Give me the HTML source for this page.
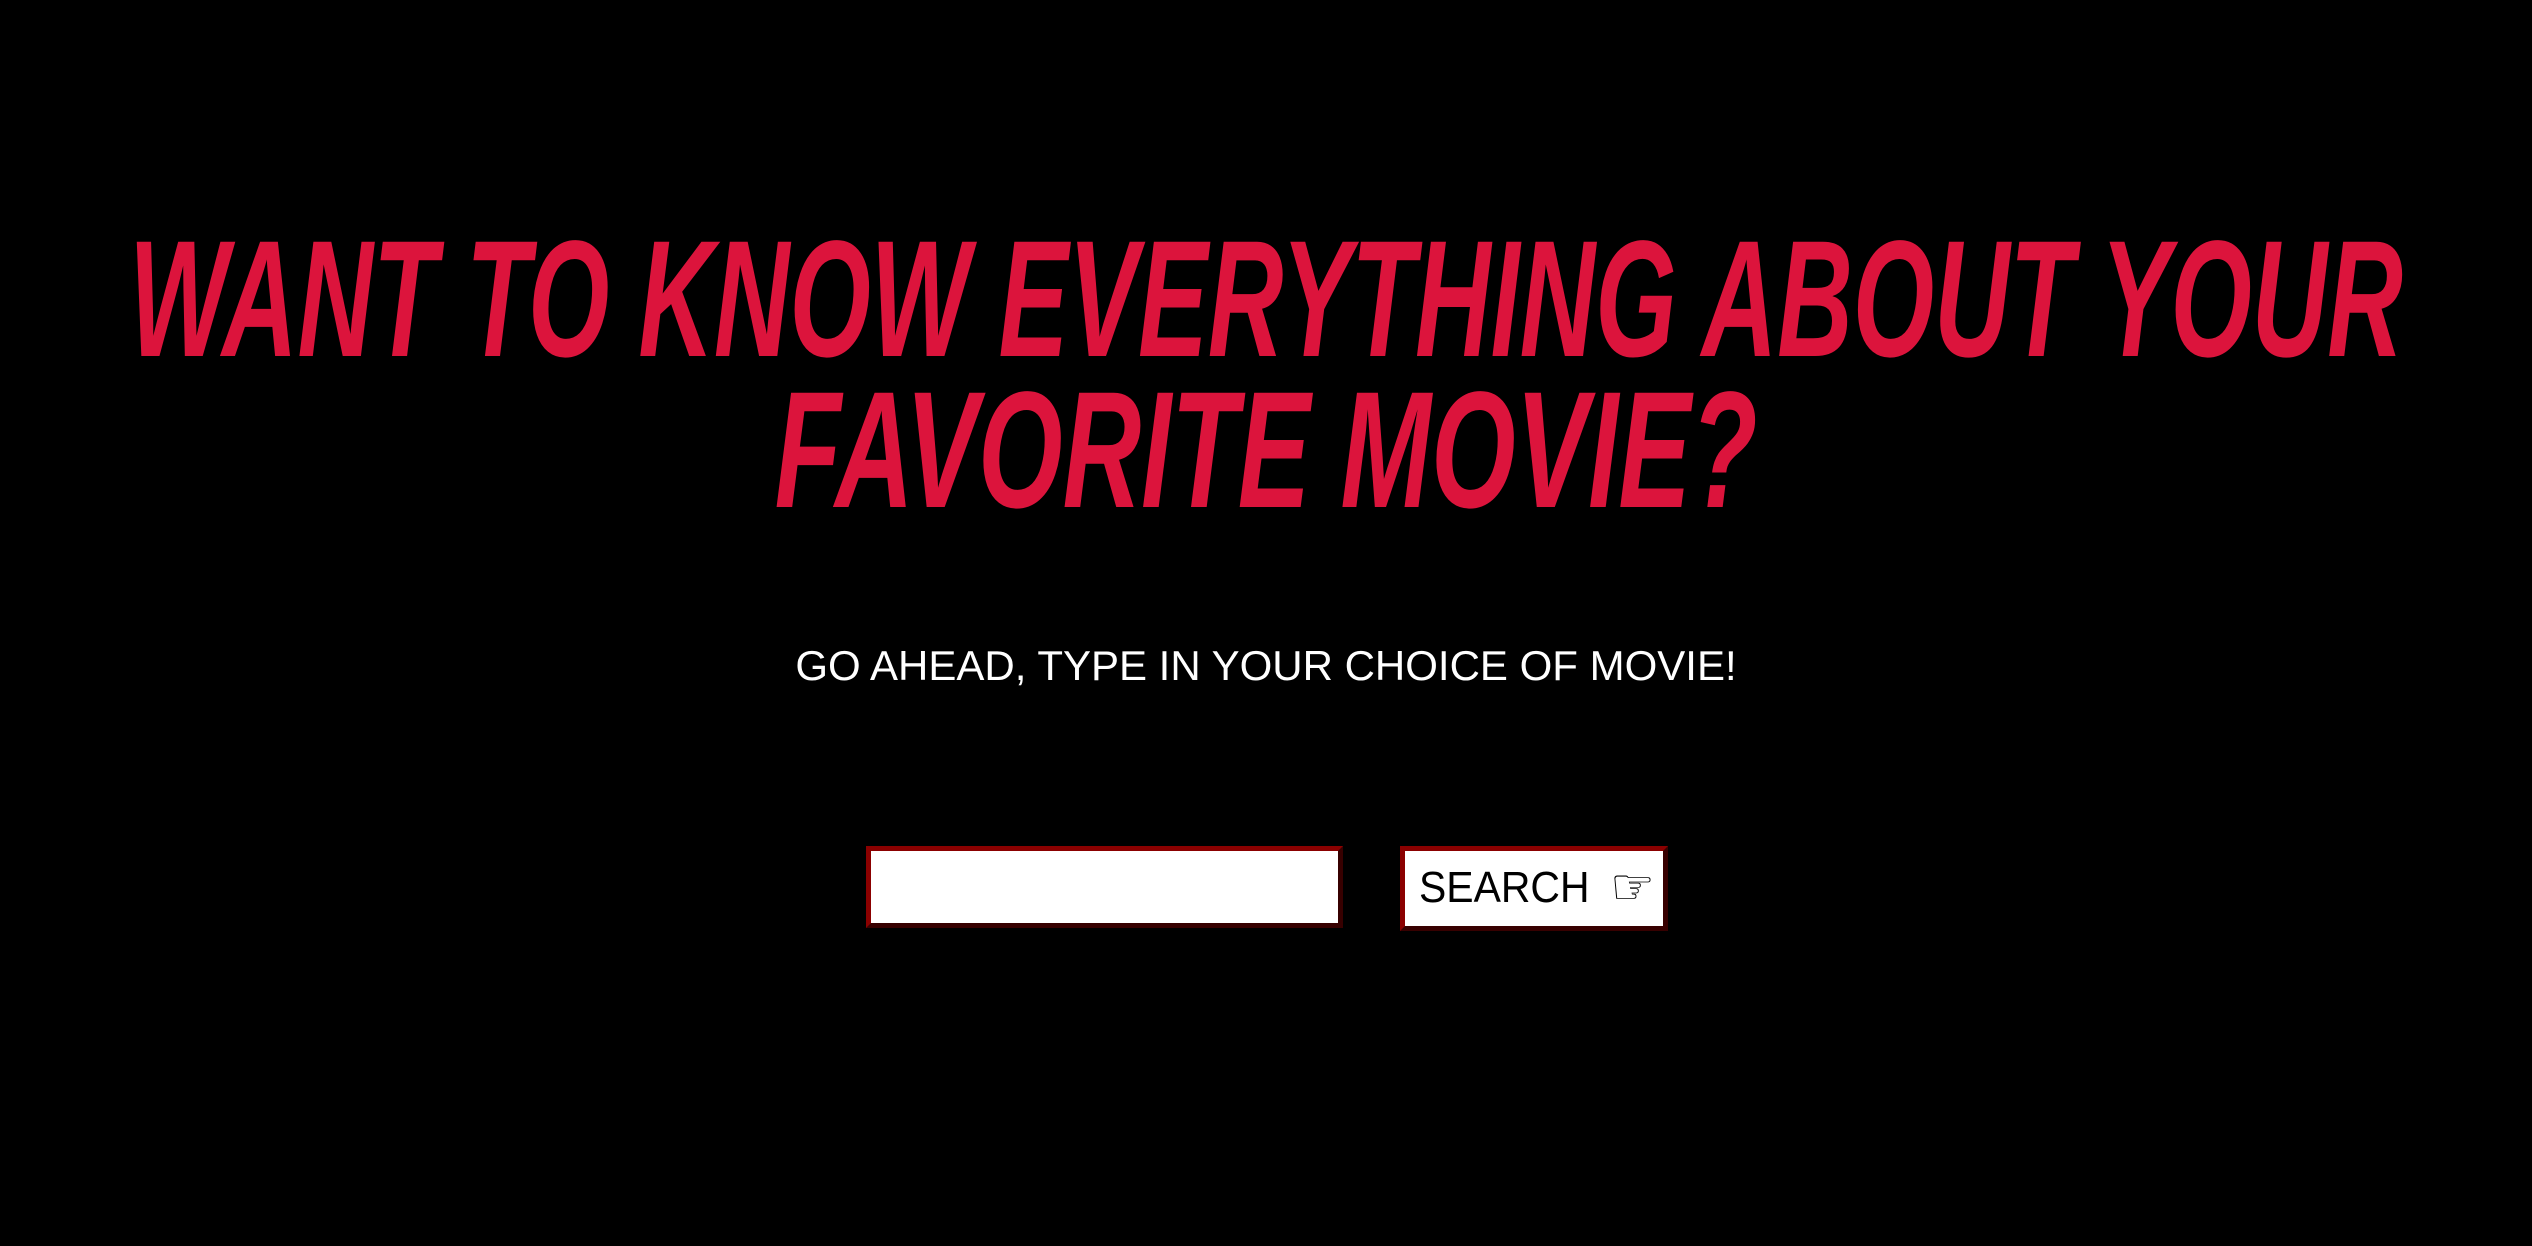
<!DOCTYPE html>
<html><head><meta charset="utf-8"><style>
html,body{margin:0;padding:0;background:#000;width:2532px;height:1246px;overflow:hidden;position:relative}
.h{position:absolute;left:1266px;color:#dc143c;font-family:"Liberation Sans",sans-serif;font-weight:bold;font-style:italic;font-size:166px;line-height:1;white-space:nowrap}
.sub{position:absolute;left:0;width:2532px;top:638px;text-align:center;color:#fff;font-family:"Liberation Sans",sans-serif;font-size:42px;line-height:56px}
.inp{position:absolute;left:866px;top:846px;width:467px;height:72px;background:#fff;border:5px outset #8b0000}
.btn{position:absolute;left:1400px;top:846px;width:258px;height:75px;background:#fff;border:5px outset #8b0000;overflow:hidden}
.st{position:absolute;left:14px;top:15px;font-family:"Liberation Sans",sans-serif;font-size:44px;line-height:44px;color:#000;transform:scaleX(0.93);transform-origin:left center;white-space:nowrap}
.hand{position:absolute;left:205px;top:8px;font-family:"DejaVu Sans",sans-serif;font-size:50px;line-height:56px;color:#000}
</style></head><body>
<div class="h" style="top:217px;transform:translateX(-50%) scaleX(0.63)">WANT TO KNOW EVERYTHING ABOUT YOUR</div>
<div class="h" style="top:368px;transform:translateX(-50%) scaleX(0.655)">FAVORITE MOVIE?</div>
<div class="sub">GO AHEAD, TYPE IN YOUR CHOICE OF MOVIE!</div>
<div class="inp"></div>
<div class="btn"><div class="st">SEARCH</div><div class="hand">☞</div></div>
</body></html>
